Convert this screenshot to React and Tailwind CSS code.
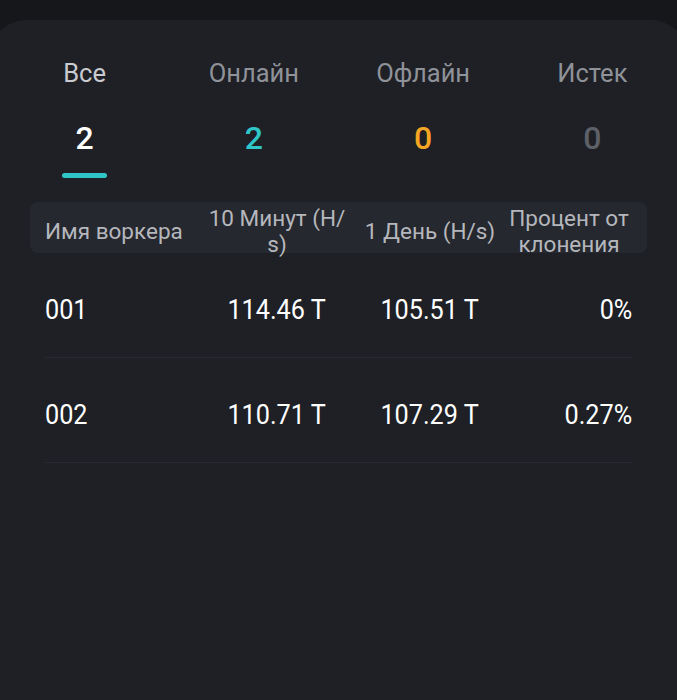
import React from "react";

const tabs = [
  { label: "Все", value: "2", labelCls: "text-[#c9cbd0]", valueCls: "text-white", active: true },
  { label: "Онлайн", value: "2", labelCls: "text-[#8f9298]", valueCls: "text-[#2fc6c8]" },
  { label: "Офлайн", value: "0", labelCls: "text-[#8f9298]", valueCls: "text-[#f5a623]" },
  { label: "Истек", value: "0", labelCls: "text-[#8f9298]", valueCls: "text-[#5d6167]" },
];

const rows = [
  { name: "001", m10: "114.46 T", d1: "105.51 T", pct: "0%" },
  { name: "002", m10: "110.71 T", d1: "107.29 T", pct: "0.27%" },
];

function Num({ children, origin }) {
  return (
    <span className={`inline-block scale-x-[0.9] ${origin}`}>{children}</span>
  );
}

export default function App() {
  return (
    <div className="w-[677px] h-[700px] overflow-hidden bg-[#15171b] pt-[20px] font-['Roboto',sans-serif]">
      <div className="-mx-[10px] h-full rounded-t-[36px] bg-[#1e2026] px-[10px]">
        <div className="grid grid-cols-4 pt-[38px]">
          {tabs.map((t) => (
            <div key={t.label} className="flex flex-col items-center">
              <div className={`text-[25.5px] leading-[30px] ${t.labelCls}`}>{t.label}</div>
              <div className={`mt-[30px] text-[32px] leading-[40px] font-medium ${t.valueCls}`}>{t.value}</div>
              <div className={`mt-[15px] h-[5px] w-[45px] rounded-full ${t.active ? "bg-[#2fc6c8]" : "bg-transparent"}`} />
            </div>
          ))}
        </div>

        <div className="mx-[30px] mt-[24px] h-[51px] rounded-[8px] bg-[#25282e] px-[15px] pt-[3px] grid grid-cols-[155px_154px_152px_1fr] items-center text-[22.5px] leading-[26px] text-[#b5b7bd]">
          <div className="whitespace-nowrap">Имя воркера</div>
          <div className="text-center whitespace-nowrap">10 Минут (H/<br />s)</div>
          <div className="text-center whitespace-nowrap">1 День (H/s)</div>
          <div className="text-center whitespace-nowrap">Процент от<br />клонения</div>
        </div>

        <div className="mx-[45px]">
          {rows.map((r) => (
            <div
              key={r.name}
              className="grid h-[105px] grid-cols-[155px_154px_152px_1fr] items-center border-b border-[#272a30] pt-[9px] text-[28px] text-white"
            >
              <div><Num origin="origin-left">{r.name}</Num></div>
              <div className="text-center"><Num origin="origin-center">{r.m10}</Num></div>
              <div className="text-center"><Num origin="origin-center">{r.d1}</Num></div>
              <div className="text-right"><Num origin="origin-right">{r.pct}</Num></div>
            </div>
          ))}
        </div>
      </div>
    </div>
  );
}
